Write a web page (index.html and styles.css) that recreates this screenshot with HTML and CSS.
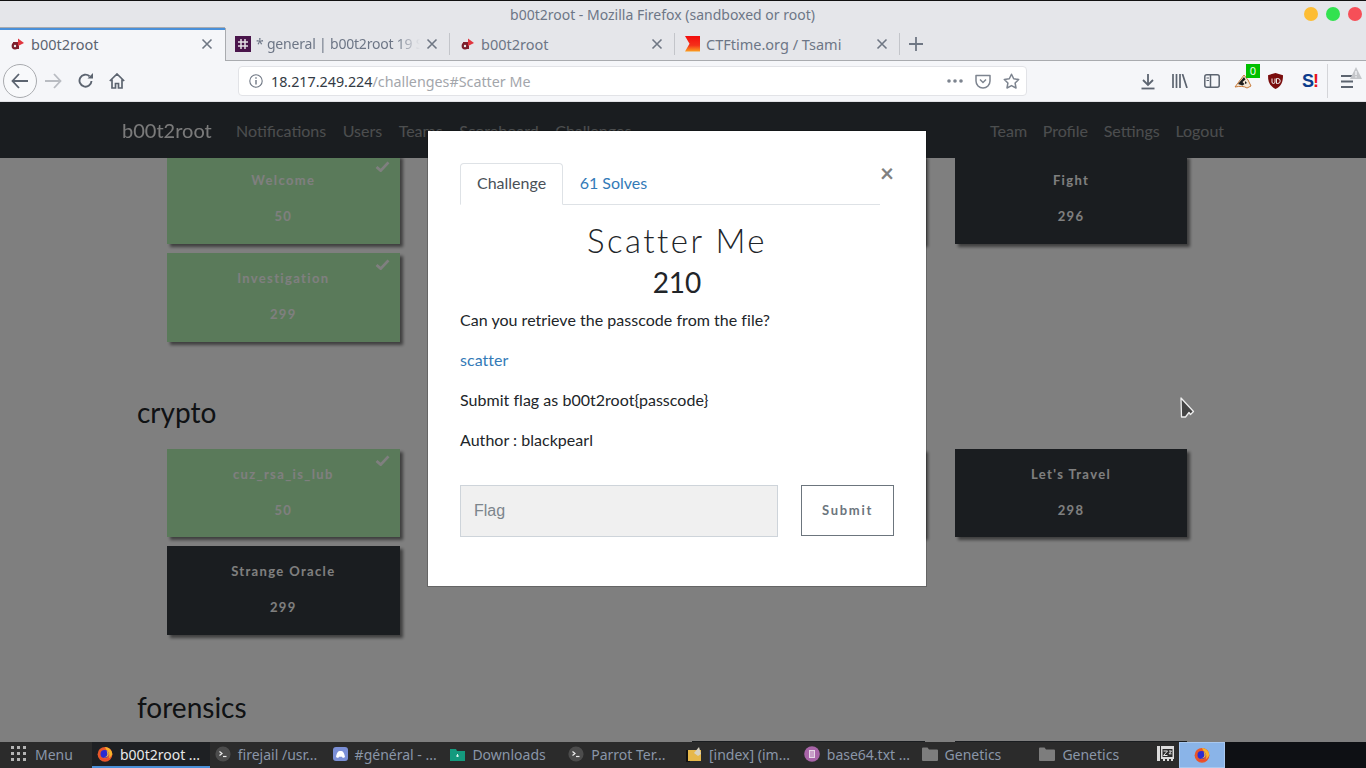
FILE: index.html
```html
<!DOCTYPE html>
<html lang="en">
<head>
<meta charset="utf-8">
<title>b00t2root</title>
<link rel="stylesheet" href="styles.css">
</head>
<body>
<svg class="defs" width="0" height="0" aria-hidden="true">
  <defs>
    <linearGradient id="ctf" x1="0" y1="0" x2="0" y2="1"><stop offset="0" stop-color="#f20d0d"/><stop offset=".6" stop-color="#f5301a"/><stop offset="1" stop-color="#fba01f"/></linearGradient>
    <symbol id="tabx" viewBox="0 0 12 12"><path d="M1.500 1.500l9 9M10.500 1.500l-9 9" fill="none" stroke="#6f7784" stroke-width="1.600"/></symbol>
    <symbol id="site" viewBox="0 0 16 16"><path d="M3 6h6v7H3z" fill="#8b2030"/><circle cx="5" cy="10" r="3.400" fill="#7a1f2c"/><circle cx="5" cy="10" r="1.200" fill="#eee"/><path d="M8 2.500l6 4.500-6 3z" fill="#e0353f"/></symbol>
    <symbol id="fox" viewBox="0 0 16 16"><circle cx="8" cy="8.300" r="7.400" fill="#e8572b"/><path d="M8 1c4 .4 7 3 7.300 7-.8 2-2 3.400-3.500 4 1-2 .8-5-1.300-7C9.500 4 8.500 2.500 8 1z" fill="#f7b32b"/><circle cx="7.500" cy="8" r="4" fill="#2b2bd0"/><path d="M9.500 4.500c2 1 3 3.500 1.500 5.500-1 1.200-3 1.500-4.500 1 2 .2 3.500-.8 3.800-2.300.2-1.500-.3-3-.8-4.200z" fill="#f9c33a"/><path d="M3 12c2 2.500 7 3 10 .5-3 1-7 1-10-.5z" fill="#f0442f"/></symbol>
    <symbol id="term" viewBox="0 0 16 16"><circle cx="8" cy="8" r="7.600" fill="#4c4c4c"/><path d="M4.500 5.500l2.500 2-2.500 2" fill="none" stroke="#eee" stroke-width="1.200"/><path d="M8 10.500h3.500" stroke="#eee" stroke-width="1.200"/></symbol>
    <symbol id="folder" viewBox="0 0 16 14"><path d="M0 1.500A1 1 0 0 1 1 .5h4.500l1.500 2h8a1 1 0 0 1 1 1V13a1 1 0 0 1-1 1H1a1 1 0 0 1-1-1z" fill="#7d7d7d"/></symbol>
    <symbol id="check" viewBox="0 0 16 12"><path d="M1.500 6.500l4.500 4 8.500-9" fill="none" stroke="#fff" stroke-width="3"/></symbol>
  </defs>
</svg>

<div class="window">
  <header class="titlebar">
    <span class="title-text">b00t2root - Mozilla Firefox (sandboxed or root)</span>
    <span class="lights"><i class="light yellow"></i><i class="light green"></i><i class="light red"></i></span>
  </header>

  <div class="tabstrip">
    <div class="tab active">
      <svg class="fav" width="16" height="16"><use href="#site"/></svg>
      <span class="tab-label">b00t2root</span>
      <svg class="tab-x" width="12" height="12"><use href="#tabx"/></svg>
    </div>
    <div class="tab">
      <svg class="fav" width="16" height="16" viewBox="0 0 16 16"><rect width="16" height="16" fill="#4a154b"/><path d="M6 3v10M10 3v10M3 6h10M3 10h10" stroke="#e5dfe6" stroke-width="1.500"/></svg>
      <span class="tab-label fade">* general | b00t2root 19 S</span>
      <svg class="tab-x" width="12" height="12"><use href="#tabx"/></svg>
    </div>
    <div class="tab">
      <svg class="fav" width="16" height="16"><use href="#site"/></svg>
      <span class="tab-label">b00t2root</span>
      <svg class="tab-x" width="12" height="12"><use href="#tabx"/></svg>
    </div>
    <div class="tab">
      <svg class="fav" width="16" height="16" viewBox="0 0 16 16"><path d="M0 0h15v15.500H0l4.500-7.700z" fill="url(#ctf)"/></svg>
      <span class="tab-label">CTFtime.org / Tsami</span>
      <svg class="tab-x" width="12" height="12"><use href="#tabx"/></svg>
    </div>
    <svg class="newtab" width="14" height="14" viewBox="0 0 14 14"><path d="M7 0v14M0 7h14" stroke="#6f7784" stroke-width="1.800"/></svg>
  </div>

  <nav class="toolbar">
    <span class="backbtn">
      <svg width="18" height="16" viewBox="0 0 18 16"><path d="M8 1L1.500 8 8 15M2 8h15" fill="none" stroke="#5c6470" stroke-width="1.800"/></svg>
    </span>
    <svg class="tool fwd" width="18" height="16" viewBox="0 0 18 16"><path d="M10 1l6.500 7-6.500 7M16 8H1" fill="none" stroke="#b9bcc2" stroke-width="1.800"/></svg>
    <svg class="tool reload" width="16" height="16" viewBox="0 0 16 16"><path d="M13.500 8A6 6 0 1 1 11.500 3.200" fill="none" stroke="#5c6470" stroke-width="1.900"/><path d="M9.500 5.500h5.500V0z" fill="#5c6470"/></svg>
    <svg class="tool home" width="16" height="16" viewBox="0 0 16 16"><path d="M.8 8L8 1l7.200 7M3 6.500V15h3.500v-4.500h3V15H13V6.500" fill="none" stroke="#5c6470" stroke-width="1.700"/></svg>
    <div class="urlbar">
      <svg class="info" width="14" height="14" viewBox="0 0 14 14"><circle cx="7" cy="7" r="6.200" fill="none" stroke="#6f7784" stroke-width="1.100"/><path d="M7 6v4.500M7 3.300v1.500" stroke="#6f7784" stroke-width="1.400"/></svg>
      <span class="url"><span class="host">18.217.249.224</span>/challenges#Scatter Me</span>
      <span class="url-icons">
        <svg width="16" height="4" viewBox="0 0 16 4"><g fill="#7d848f"><circle cx="2" cy="2" r="1.800"/><circle cx="8" cy="2" r="1.800"/><circle cx="14" cy="2" r="1.800"/></g></svg>
        <svg width="16" height="15" viewBox="0 0 16 15"><path d="M1 1.500h14v5.500a7 7 0 0 1-14 0z" fill="none" stroke="#7d848f" stroke-width="1.500" stroke-linejoin="round"/><path d="M5 5.500l3 3 3-3" fill="none" stroke="#7d848f" stroke-width="1.500"/></svg>
        <svg width="17" height="16" viewBox="0 0 17 16"><path d="M8.500 1.200l2.200 4.600 5 .7-3.600 3.500.9 5-4.500-2.400L4 15l.9-5L1.300 6.500l5-.7z" fill="none" stroke="#7d848f" stroke-width="1.500" stroke-linejoin="round"/></svg>
      </span>
    </div>
    <div class="tool-right">
      <svg width="16" height="17" viewBox="0 0 16 17"><path d="M8 1v11M3 7l5 5 5-5" fill="none" stroke="#5c6470" stroke-width="1.800"/><path d="M1.500 15.500h13" stroke="#5c6470" stroke-width="1.800"/></svg>
      <svg width="16" height="14" viewBox="0 0 16 14"><path d="M1 0v14M4.500 0v14M8 0v14M10.500 0l4.500 14" fill="none" stroke="#5c6470" stroke-width="1.700"/></svg>
      <svg width="16" height="14" viewBox="0 0 16 14"><rect x=".8" y=".8" width="14.400" height="12.400" rx="2" fill="none" stroke="#5c6470" stroke-width="1.500"/><path d="M6.500 1v12" stroke="#5c6470" stroke-width="1.500"/><path d="M2.500 4h2.500M2.500 6.500h2.500" stroke="#5c6470"/></svg>
      <span class="badger">
        <svg class="badger-art" width="18" height="15" viewBox="0 0 18 15"><path d="M1 13L10 1l4 5 3 6-4 2c-3-2-7-2-12-1z" fill="#f4e7d7" stroke="#c77a3a"/><path d="M4 10l6-7 1.500 2.500-3 2.500 2 2-2 1.500zM11 7l2 2-2 1z" fill="#1c1c1c"/></svg>
        <b class="badge">0</b>
      </span>
      <svg width="15" height="16" viewBox="0 0 15 16"><path d="M7.500 0L15 2.200c0 7-1.800 11-7.500 13.800C1.800 13.200 0 9.200 0 2.200z" fill="#7a0d0d"/><path d="M4 5.500v3.500a1.500 1.500 0 0 0 3 0V5.500M8.500 5.500v5h1.200a2.500 2.500 0 0 0 0-5z" fill="none" stroke="#eee" stroke-width="1"/></svg>
      <span class="sbang"><span class="s">S</span><span class="bang">!</span></span>
      <i class="divider"></i>
      <span class="menu">
        <svg width="12" height="13" viewBox="0 0 12 13"><path d="M0 1h12M0 6.500h12M0 12h12" stroke="#5c6470" stroke-width="1.800"/></svg>
        <svg class="warn" width="12" height="12" viewBox="0 0 12 12"><path d="M6 0l6 12H0z" fill="#c4c6ca"/><path d="M6 4v4M6 9.200v1.300" stroke="#f5f6f9" stroke-width="1.300"/></svg>
      </span>
    </div>
  </nav>

  <main class="page">
    <div class="site-nav">
      <span class="brand">b00t2root</span>
      <span class="nav-group">
        <a>Notifications</a><a>Users</a><a>Teams</a><a>Scoreboard</a><a>Challenges</a>
      </span>
      <span class="nav-group right">
        <a>Team</a><a>Profile</a><a>Settings</a><a>Logout</a>
      </span>
    </div>

    <section class="board">
      <div class="grid">
        <div class="card solved"><svg class="tick" width="15" height="11"><use href="#check"/></svg><p>Welcome</p><p>50</p></div>
        <div class="card"><p>Misc</p><p>100</p></div>
        <div class="card"><p>Misc</p><p>200</p></div>
        <div class="card"><p>Fight</p><p>296</p></div>
        <div class="card solved"><svg class="tick" width="15" height="11"><use href="#check"/></svg><p>Investigation</p><p>299</p></div>
      </div>
      <h3 class="cat cat-crypto">crypto</h3>
      <div class="grid">
        <div class="card solved"><svg class="tick" width="15" height="11"><use href="#check"/></svg><p>cuz_rsa_is_lub</p><p>50</p></div>
        <div class="card"><p>Crypto</p><p>100</p></div>
        <div class="card"><p>Crypto</p><p>200</p></div>
        <div class="card"><p>Let's Travel</p><p>298</p></div>
        <div class="card"><p>Strange Oracle</p><p>299</p></div>
      </div>
      <h3 class="cat cat-forensics">forensics</h3>
      <div class="grid">
        <div class="card third"><p>Forensics</p><p>100</p></div>
        <div class="card"><p>Forensics</p><p>200</p></div>
      </div>
    </section>

    <div class="backdrop"></div>

    <div class="modal">
      <button class="close" type="button">×</button>
      <div class="tabs">
        <span class="mtab on">Challenge</span>
        <span class="mtab">61 Solves</span>
      </div>
      <h3 class="chal-name">Scatter Me</h3>
      <h4 class="chal-value">210</h4>
      <p class="desc">Can you retrieve the passcode from the file?</p>
      <p class="desc"><a class="link">scatter</a></p>
      <p class="desc">Submit flag as b00t2root{passcode}</p>
      <p class="desc">Author : blackpearl</p>
      <form class="flagrow">
        <input class="flag" type="text" placeholder="Flag">
        <button class="submit" type="button">Submit</button>
      </form>
    </div>

    <svg class="cursor" width="15" height="22" viewBox="0 0 15 22"><path d="M1 1L1.500 20H5.500L9 15.500 10.500 17.500 13.500 14.500z" fill="#444" stroke="#eee" stroke-width="1.300" stroke-linejoin="round"/></svg>
  </main>

  <footer class="taskbar">
    <div class="startmenu">
      <svg width="16" height="16" viewBox="0 0 16 16"><g fill="#b5b5b5"><rect x="0" y="0" width="3" height="3"/><rect x="6" y="0" width="3" height="3"/><rect x="12" y="0" width="3" height="3"/><rect x="0" y="6" width="3" height="3"/><rect x="6" y="6" width="3" height="3"/><rect x="12" y="6" width="3" height="3"/><rect x="0" y="12" width="3" height="3"/><rect x="6" y="12" width="3" height="3"/><rect x="12" y="12" width="3" height="3"/></g></svg>
      <span>Menu</span>
    </div>
    <div class="task current"><svg width="16" height="16"><use href="#fox"/></svg><span>b00t2root ...</span></div>
    <div class="task"><svg width="16" height="16"><use href="#term"/></svg><span>firejail /usr...</span></div>
    <div class="task"><svg width="15" height="14" viewBox="0 0 15 14"><rect width="15" height="14" rx="3" fill="#7b8fd6"/><path d="M3 10c1-5 2-6 4.500-6S11 5 12 10c-1 .8-2 1-2.500.8l-.5-1h-3l-.5 1C5 11 4 10.800 3 10z" fill="#fff"/></svg><span>#général - ...</span></div>
    <div class="task"><svg width="15" height="13" viewBox="0 0 15 13"><path d="M0 1h6l1 2h8v10H0z" fill="#149a7e"/><path d="M6 8h3M7.500 6v3" stroke="#d6f3ec"/></svg><span>Downloads</span></div>
    <div class="task"><svg width="16" height="16"><use href="#term"/></svg><span>Parrot Ter...</span></div>
    <div class="task"><svg width="16" height="16" viewBox="0 0 16 16"><rect y="4" width="4" height="12" fill="#111"/><rect x="2" y="4" width="13" height="11" fill="#e6b84a"/><path d="M8 7l5-6 2 7-3 2z" fill="#d8d2c0"/></svg><span>[index] (im...</span></div>
    <div class="task"><svg width="16" height="16" viewBox="0 0 16 16"><circle cx="8" cy="8" r="7.800" fill="#a864a8"/><rect x="5" y="4" width="6" height="8" fill="#e7d8e7"/><path d="M6 6h4M6 8h4M6 10h4" stroke="#a864a8"/></svg><span>base64.txt ...</span></div>
    <div class="task"><svg width="16" height="14"><use href="#folder"/></svg><span>Genetics</span></div>
    <div class="task"><svg width="16" height="14"><use href="#folder"/></svg><span>Genetics</span></div>
    <div class="memslot"><svg width="17" height="16" viewBox="0 0 17 16"><path d="M0 0h3v15H0zM4 0h13v13h-1v2h-2v-2h-2v2h-2v-2H8v2H6v-2H4z" fill="#dcdcdc"/><rect x="5.500" y="3" width="10" height="8" fill="#2a2a2a"/><path d="M6.500 5h4l-4 4.500h4M12 5h2.500L12 7.800h2.500" fill="none" stroke="#e6e6e6"/></svg></div>
    <div class="pager"><svg width="16" height="16"><use href="#fox"/></svg></div>
  </footer>
</div>
</body>
</html>
```

FILE: styles.css
```css
* { box-sizing: border-box; }
html, body { margin: 0; height: 100%; overflow: hidden; }
.defs { position: absolute; }
.window { width: 1366px; height: 768px; display: flex; flex-direction: column; font-family: "Noto Sans", sans-serif; background: #e5e6ea; }

.titlebar { height: 28px; flex: none; border-top: 1px solid #111; display: flex; align-items: center; justify-content: center; position: relative; }
.title-text { font-size: 14px; color: #6d7686; margin-left: -41px; }
.lights { position: absolute; right: 4px; top: 6px; display: flex; gap: 8px; }
.light { width: 14px; height: 14px; border-radius: 50%; display: block; }
.yellow { background: #fdbd34; }
.green { background: #32e24f; }
.red { background: #f64f58; }

.tabstrip { height: 33px; flex: none; display: flex; align-items: stretch; border-bottom: 1px solid #a9abaf; }
.tab { width: 225px; display: flex; align-items: center; padding: 0 12px 1px 10px; position: relative; color: #6d7686; font-size: 14.500px; }
.tab::after { content: ""; position: absolute; right: 0; top: 5px; bottom: 5px; width: 1px; background: #c3c5ca; }
.tab.active { background: #f5f6f9; color: #5c6470; border-top: 2px solid #4a90d9; margin-bottom: -1px; padding-bottom: 3px; box-shadow: 0 -1px 0 #a9abaf, 1px 0 0 #a9abaf; }
.tab.active::after { display: none; }
.fav { flex: none; }
.tab-label { margin-left: 5px; flex: 1; white-space: nowrap; overflow: hidden; }
.fade { font-size: 14px; letter-spacing: -.2px; -webkit-mask-image: linear-gradient(to right, #000 85%, transparent); mask-image: linear-gradient(to right, #000 85%, transparent); }
.tab-x { flex: none; margin-left: 6px; }
.newtab { margin: 9px 0 0 9px; }

.toolbar { height: 41px; flex: none; background: #f5f6f9; display: flex; align-items: center; padding: 0 0 0 3px; border-bottom: 1px solid #e0e1e5; }
.backbtn { width: 34px; height: 34px; border: 1px solid #a9abaf; border-radius: 50%; display: flex; align-items: center; justify-content: center; flex: none; background: #f8f9fb; }
.tool { flex: none; }
.fwd { margin-left: 7px; }
.reload { margin-left: 16px; }
.home { margin-left: 15px; }
.urlbar { margin-left: 113px; width: 789px; height: 30px; background: #fff; border: 1px solid #e2e3e7; border-radius: 4px; display: flex; align-items: center; padding: 0 6px 0 10px; }
.info { flex: none; }
.url { margin-left: 8px; font-size: 14.300px; color: #a3a6ab; white-space: nowrap; flex: 1; }
.host { color: #333a44; }
.url-icons { display: flex; align-items: center; gap: 12px; }
.tool-right { display: flex; align-items: center; margin-left: 113px; position: relative; gap: 16px; flex: none; }
.badger { position: relative; display: block; width: 16px; height: 16px; }
.badger-art { position: absolute; left: -2px; top: 1px; }
.badge { position: absolute; left: 10px; top: -9px; width: 14px; height: 14px; background: #00c000; color: #eaffea; font: 400 11px/14px "Noto Sans", sans-serif; text-align: center; }
.sbang { font: 700 18px/1 "Liberation Sans", sans-serif; width: 16px; letter-spacing: -1px; margin-left: 3px; }
.s { color: #0b3b8c; }
.bang { color: #e8141c; }
.divider { width: 1px; height: 34px; background: #d4d5d9; margin-left: -7px; display: block; }
.menu { position: relative; display: block; width: 12px; height: 13px; margin-left: -3px; }
.menu svg { display: block; }
.warn { position: absolute; left: 9px; top: -8px; }

.page { height: 640px; flex: none; position: relative; overflow: hidden; background: #fff; font-family: Lato, sans-serif; }
.site-nav { position: absolute; left: 0; right: 0; top: 0; height: 56px; background: #343a40; display: flex; align-items: center; padding: 0 0 0 122px; z-index: 1; }
.brand { font-size: 20px; color: #fff; opacity: .95; width: 114px; flex: none; }
.nav-group { display: flex; gap: 16.500px; font-size: 16px; color: rgba(255,255,255,.5); }
.nav-group.right { position: absolute; left: 990px; gap: 15.700px; }

.board { padding: 53px 0 0 137px; }
.grid { display: grid; grid-template-columns: repeat(4, 232.600px); column-gap: 30px; row-gap: 9px; margin-left: 30px; }
.card { height: 88.800px; background: #343a40; color: #fff; text-align: center; font-size: 13px; font-weight: 700; letter-spacing: 1.350px; box-shadow: 3px 3px 3px rgba(0,0,0,.5); position: relative; padding-top: 16px; }
.card p { margin: 0; line-height: 18px; }
.card p + p { margin-top: 18px; }
.solved { background: #b5f4b4; }
.third { grid-column: 3; }
.tick { position: absolute; right: 10px; top: 6px; }
.cat { margin: 0; font-size: 28px; font-weight: 400; color: #212529; line-height: 34px; }
.cat-crypto { padding-top: 53px; height: 107px; }
.cat-forensics { padding-top: 55px; height: 105.800px; }

.backdrop { position: absolute; inset: 0; background: rgba(0,0,0,.5); z-index: 2; }

.modal { position: absolute; left: 428px; top: 29px; width: 498px; height: 455px; background: #fff; z-index: 3; padding: 32px 32px 0; box-shadow: 0 0 0 1px rgba(0,0,0,.2); color: #212529; }
.close { position: absolute; left: 452px; top: 29px; border: 0; background: none; padding: 0; font: 700 24px/26px Lato, sans-serif; color: #808080; }
.tabs { display: flex; width: 420px; height: 42px; border-bottom: 1px solid #dee2e6; font-size: 16px; }
.mtab { padding: 8px 16.500px; height: 42px; line-height: 24px; color: #337ab7; }
.mtab.on { color: #495057; background: #fff; border: 1px solid #dee2e6; border-bottom: 1px solid #fff; border-radius: 4px 4px 0 0; padding: 7px 16px; height: 42px; }
.chal-name { margin: 16px 0 0 0; text-align: center; font-weight: 300; font-size: 33px; letter-spacing: 2.500px; line-height: 38px; color: #212529; width: 434px; }
.chal-value { margin: 5px 0 0 0; text-align: center; font-weight: 400; font-size: 28px; line-height: 36px; width: 434px; }
.desc { margin: 0 0 16px; font-size: 16px; line-height: 24px; letter-spacing: .03px; }
.chal-value + .desc { margin-top: 8px; }
.link { color: #337ab7; }
.flagrow { display: flex; margin-top: 33px; width: 434px; justify-content: space-between; align-items: flex-start; }
.flag { width: 318px; height: 52px; background: #f0f0f0; border: 1px solid #ced4da; padding: 0 13px; font: 16px "Liberation Sans", sans-serif; color: #6c757d; }
.flag::placeholder { color: #7c858c; opacity: 1; }
.submit { width: 93px; height: 51px; background: #fff; border: 1px solid #6c757d; font: 700 13px Lato, sans-serif; letter-spacing: 1.700px; color: #6c757d; padding: 0 0 2px; }

.cursor { position: absolute; left: 1180px; top: 295px; z-index: 4; }

.taskbar { height: 26px; flex: none; background: #0e1014; display: flex; align-items: stretch; position: relative; z-index: 5; font-size: 14px; color: #8a96a8; }
.startmenu { width: 92px; background: #2b2b2b; display: flex; align-items: center; padding: 0 0 2px 11px; gap: 8px; }
.task { width: 117.800px; background: #2b2b2b; display: flex; align-items: center; padding: 0 0 2px 5px; gap: 7px; white-space: nowrap; overflow: hidden; flex: none; }
.task svg { flex: none; }
.current { background: #1e2023; color: #e8e8e8; border-bottom: 2px solid #4a90d9; padding-bottom: 0; }
.memslot { width: 27px; background: #2b2b2b; display: flex; align-items: center; justify-content: flex-end; padding: 0 5px 2px 0; flex: none; }
.pager { width: 46px; background: #8ab4e8; border: 1px solid #a8c8f0; display: flex; align-items: center; justify-content: center; flex: none; }
```
